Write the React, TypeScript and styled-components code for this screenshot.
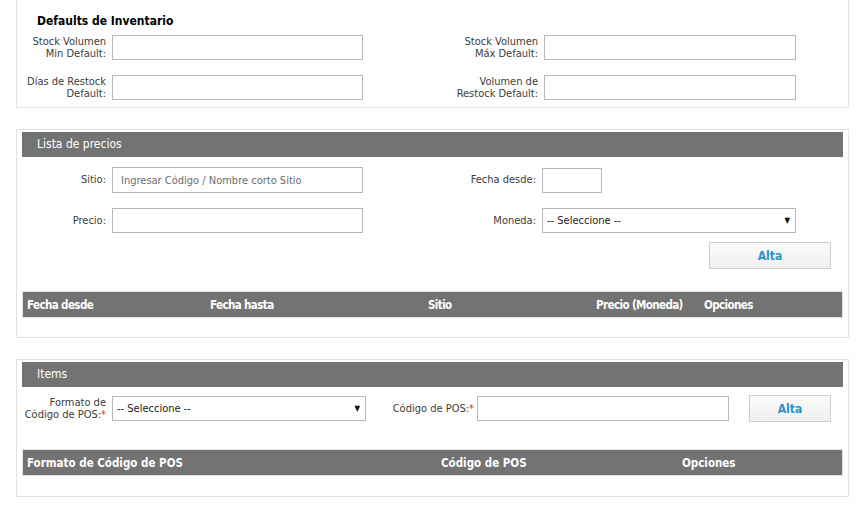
import React from 'react';
import styled, { createGlobalStyle } from 'styled-components';

const GlobalStyle = createGlobalStyle`
    html, body {
        margin: 0;
        padding: 0;
        background: #ffffff;
    }
    body {
        font-family: "DejaVu Sans Condensed", "Liberation Sans", sans-serif;
        font-size: 11px;
        color: #3c3c3c;
    }
    * {
        box-sizing: border-box;
    }
`;

const Page = styled.div`
    width: 866px;
    padding: 0 17px 0 16px;
`;

const Panel = styled.section<{ $cropped?: boolean; $bottom?: number }>`
    border: 1px solid #e4e4dc;
    border-top: ${(p) => (p.$cropped ? 'none' : '1px solid #e4e4dc')};
    padding: ${(p) => (p.$cropped ? '14px 0 7px 0' : `2px 5px ${p.$bottom ?? 19}px 5px`)};
    margin-bottom: 21px;
`;

const PanelTitle = styled.h3`
    margin: 0 0 7px 0;
    padding-left: 20px;
    font-size: 12px;
    line-height: 14px;
    font-weight: bold;
    color: #000000;
`;

const PanelHeader = styled.div`
    height: 25px;
    line-height: 25px;
    padding-left: 15px;
    background: #737373;
    color: #ffffff;
    font-size: 12px;
`;

const FormGrid = styled.div<{ $cols: string; $top?: number }>`
    display: grid;
    grid-template-columns: ${(p) => p.$cols};
    column-gap: 6px;
    row-gap: 15px;
    align-items: center;
    margin-top: ${(p) => p.$top ?? 0}px;
`;

const Label = styled.label`
    text-align: right;
    line-height: 12px;
    color: #3c3c3c;
    white-space: nowrap;
`;

const Required = styled.span`
    color: #e8262b;
`;

const TextInput = styled.input<{ $width?: number; $height?: number }>`
    width: ${(p) => (p.$width ? `${p.$width}px` : '100%')};
    height: ${(p) => p.$height ?? 25}px;
    border: 1px solid #b9b9b9;
    padding: 0 8px;
    font-family: inherit;
    font-size: 11px;
    color: #333;
    background: #fff;
    outline: none;

    &::placeholder {
        color: #6d6d6d;
    }
`;

const SelectBox = styled.div<{ $height?: number }>`
    display: flex;
    align-items: center;
    justify-content: space-between;
    height: ${(p) => p.$height ?? 25}px;
    border: 1px solid #b9b9b9;
    padding: 0 5px 0 4px;
    color: #222;
    background: #fff;
`;

const Arrow = styled.span`
    font-size: 8px;
    color: #111;
`;

const ActionRow = styled.div`
    display: flex;
    justify-content: flex-end;
    padding-right: 12px;
    margin-top: 9px;
`;

const AltaButton = styled.button<{ $width: number }>`
    width: ${(p) => p.$width}px;
    height: 27px;
    border: 1px solid #cfcfcf;
    background: linear-gradient(#fbfbfb, #f0f0f0);
    color: #2a93cc;
    font-family: inherit;
    font-size: 12px;
    font-weight: bold;
    cursor: pointer;
`;

const TableHead = styled.div<{ $cols: string; $top: number; $narrow?: boolean }>`
    display: grid;
    grid-template-columns: ${(p) => p.$cols};
    height: 27px;
    align-items: center;
    margin-top: ${(p) => p.$top}px;
    padding-left: 4px;
    border: 1px solid #e2e2e2;
    background: #737373;
    color: #ffffff;
    font-weight: bold;
    font-size: ${(p) => (p.$narrow ? '11.5px' : '11.5px')};
    letter-spacing: ${(p) => (p.$narrow ? '-0.6px' : '0')};
`;

const ItemsRow = styled.div`
    display: flex;
    align-items: center;
    margin-top: 8px;
`;

const ItemsLabel = styled(Label)<{ $width: number; $gap: number }>`
    width: ${(p) => p.$width}px;
    margin-right: ${(p) => p.$gap}px;
`;

const ItemsSelect = styled(SelectBox)`
    width: 254px;
`;

const Spacer = styled.div<{ $w: number }>`
    width: ${(p) => p.$w}px;
    flex-shrink: 0;
`;

const Select: React.FC<{ height?: number }> = ({ height }) => (
    <SelectBox $height={height}>
        <span>-- Seleccione --</span>
        <Arrow>▼</Arrow>
    </SelectBox>
);

export default function App() {
    return (
        <Page>
            <GlobalStyle />

            {/* Defaults de Inventario */}
            <Panel $cropped>
                <PanelTitle>Defaults de Inventario</PanelTitle>
                <FormGrid $cols="89px 251px 169px 252px">
                    <Label>Stock Volumen<br />Min Default:</Label>
                    <TextInput />
                    <Label>Stock Volumen<br />Máx Default:</Label>
                    <TextInput />
                    <Label>Días de Restock<br />Default:</Label>
                    <TextInput />
                    <Label>Volumen de<br />Restock Default:</Label>
                    <TextInput />
                </FormGrid>
            </Panel>

            {/* Lista de precios */}
            <Panel>
                <PanelHeader>Lista de precios</PanelHeader>
                <FormGrid $cols="84px 251px 167px 254px" $top={10}>
                    <Label>Sitio:</Label>
                    <TextInput $height={26} placeholder="Ingresar Código / Nombre corto Sitio" />
                    <Label>Fecha desde:</Label>
                    <TextInput $width={60} />
                    <Label>Precio:</Label>
                    <TextInput />
                    <Label>Moneda:</Label>
                    <Select />
                </FormGrid>
                <ActionRow>
                    <AltaButton $width={122}>Alta</AltaButton>
                </ActionRow>
                <TableHead $cols="183px 218px 168px 108px 1fr" $top={22} $narrow>
                    <span>Fecha desde</span>
                    <span>Fecha hasta</span>
                    <span>Sitio</span>
                    <span>Precio (Moneda)</span>
                    <span>Opciones</span>
                </TableHead>
            </Panel>

            {/* Items */}
            <Panel $bottom={20}>
                <PanelHeader>Items</PanelHeader>
                <ItemsRow>
                    <ItemsLabel $width={84} $gap={6}>
                        Formato de<br />Código de POS:<Required>*</Required>
                    </ItemsLabel>
                    <ItemsSelect $height={25}>
                        <span>-- Seleccione --</span>
                        <Arrow>▼</Arrow>
                    </ItemsSelect>
                    <ItemsLabel $width={108} $gap={3}>
                        Código de POS:<Required>*</Required>
                    </ItemsLabel>
                    <TextInput $width={252} />
                    <Spacer $w={20} />
                    <AltaButton $width={82}>Alta</AltaButton>
                </ItemsRow>
                <TableHead $cols="414px 241px 1fr" $top={27}>
                    <span>Formato de Código de POS</span>
                    <span>Código de POS</span>
                    <span>Opciones</span>
                </TableHead>
            </Panel>
        </Page>
    );
}
